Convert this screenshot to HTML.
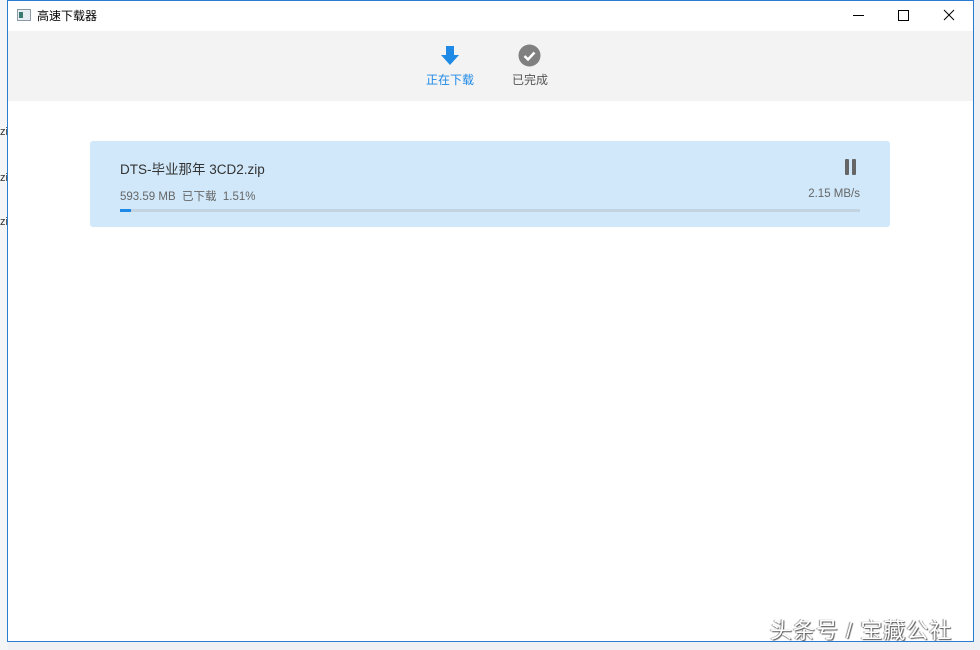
<!DOCTYPE html>
<html><head><meta charset="utf-8"><style>
*{margin:0;padding:0;box-sizing:border-box}
body{width:980px;height:650px;background:#eef0f3;position:relative;overflow:hidden;font-family:"Liberation Sans","Noto Sans CJK SC",sans-serif}
.bg{position:absolute;left:0;top:0;width:8px;height:650px;background:#f4f5f7}
.bgt{position:absolute;left:0;font-size:11px;color:#333}
.win{position:absolute;left:7px;top:0;width:967px;height:642px;border:1px solid #2b7bd0;background:#fff;overflow:hidden}
.title{position:absolute;left:0;top:0;width:100%;height:30px;background:#fff}
.title .t{position:absolute;left:29px;top:6px;font-size:12px;color:#000}
.ico{position:absolute;left:9px;top:8px;width:14px;height:12px;border:1px solid #8a9aa8;background:#e6ecef}
.ico:before{content:"";position:absolute;left:1px;top:2px;width:4px;height:6px;background:#3a7a70}
.tb{position:absolute;left:0;top:30px;width:100%;height:70px;background:#f3f3f3}
.tab{position:absolute;font-size:12px;top:40px;}
.card{position:absolute;left:82px;top:140px;width:800px;height:86px;background:#d0e8f9;border-radius:3px}
.name{position:absolute;left:30px;top:17px;font-size:13.5px;color:#333}
.info{position:absolute;left:30px;top:47px;font-size:11.5px;color:#666}
.spd{position:absolute;right:30px;top:47px;font-size:11.5px;color:#666}
.bar{position:absolute;left:30px;top:68px;width:740px;height:3px;background:#c2d4e2}
.bar i{position:absolute;left:0;top:0;width:11px;height:3px;background:#1e8ae6}
.p{position:absolute;top:18px;width:4px;height:16px;background:#666;border-radius:1px}
.wm{position:absolute;top:612px;font-size:22px;color:#fff;text-shadow:1px 1px 1px #555,-1px 0 1px #888;letter-spacing:1px}
</style></head><body>
<div class="bg"></div>
<div class="bgt" style="top:126px">zi</div><div class="bgt" style="top:172px">zi</div><div class="bgt" style="top:216px">zi</div>
<div class="win">
<div class="title"><div class="ico"></div><div class="t">高速下载器</div>
<svg style="position:absolute;left:843px;top:7px" width="110" height="16"><line x1="2" y1="7.5" x2="13" y2="7.5" stroke="#000"/><rect x="47.5" y="2.5" width="10" height="10" fill="none" stroke="#000"/><path d="M93 2L103 12M103 2L93 12" stroke="#000"/></svg>
</div>
<div class="tb">
<svg style="position:absolute;left:432px;top:14px" width="20" height="22"><path d="M6 1h8v9h5L10 20 1 10h5z" fill="#1e8ae6"/></svg>
<div class="tab" style="left:418px;top:40px;color:#1e8ae6">正在下载</div>
<svg style="position:absolute;left:510px;top:13px" width="23" height="23"><circle cx="11.5" cy="11.5" r="11" fill="#808080"/><path d="M6.5 12l3.5 3.5 6.5-7" stroke="#fff" stroke-width="2.5" fill="none"/></svg>
<div class="tab" style="left:504px;color:#555">已完成</div>
</div>
<div class="card">
<div class="name">DTS-毕业那年 3CD2.zip</div>
<div class="p" style="left:755px"></div><div class="p" style="left:762px"></div>
<div class="info">593.59 MB &nbsp;已下载 &nbsp;1.51%</div>
<div class="spd">2.15 MB/s</div>
<div class="bar"><i></i></div>
</div>
<div class="wm" style="left:762px">头条号 / 宝藏公社</div>
</div>
</body></html>
